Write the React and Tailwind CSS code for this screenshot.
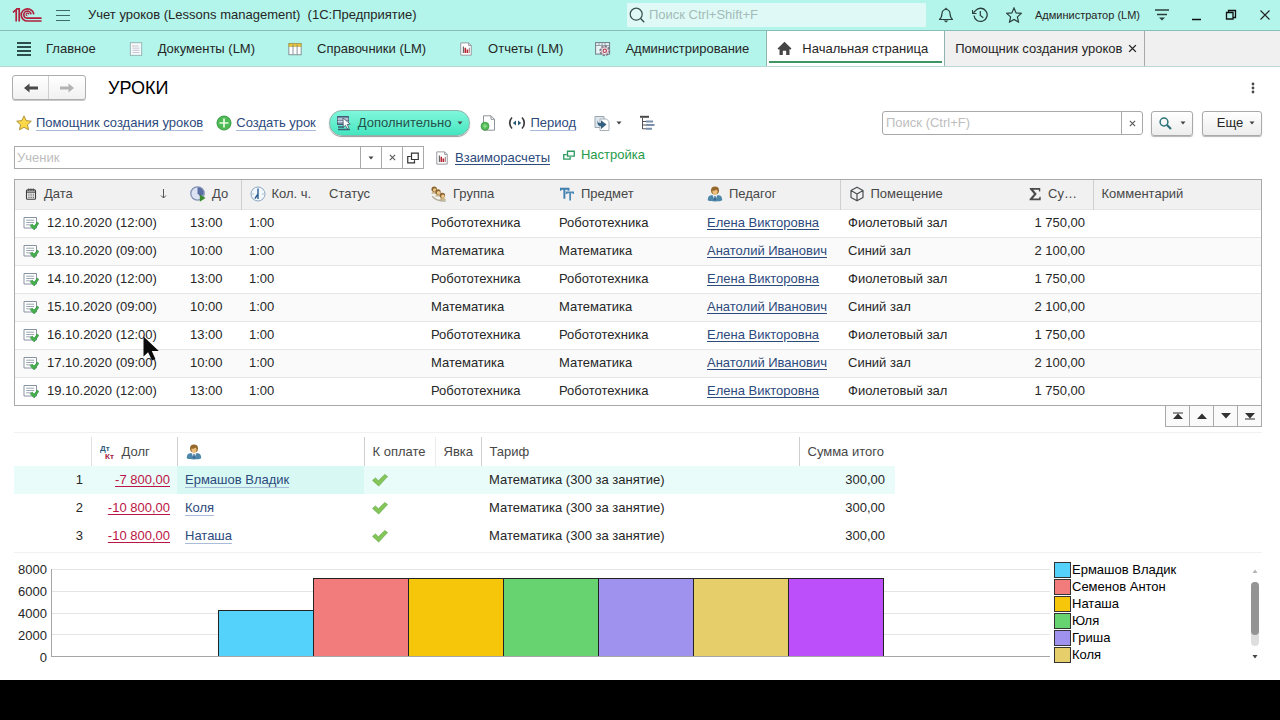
import React from 'react';

const lessons = [
  { date: '12.10.2020 (12:00)', to: '13:00', subject: 'Робототехника', teacher: 'Елена Викторовна', room: 'Фиолетовый зал', sum: '1 750,00' },
  { date: '13.10.2020 (09:00)', to: '10:00', subject: 'Математика', teacher: 'Анатолий Иванович', room: 'Синий зал', sum: '2 100,00' },
  { date: '14.10.2020 (12:00)', to: '13:00', subject: 'Робототехника', teacher: 'Елена Викторовна', room: 'Фиолетовый зал', sum: '1 750,00' },
  { date: '15.10.2020 (09:00)', to: '10:00', subject: 'Математика', teacher: 'Анатолий Иванович', room: 'Синий зал', sum: '2 100,00' },
  { date: '16.10.2020 (12:00)', to: '13:00', subject: 'Робототехника', teacher: 'Елена Викторовна', room: 'Фиолетовый зал', sum: '1 750,00', pointer: true },
  { date: '17.10.2020 (09:00)', to: '10:00', subject: 'Математика', teacher: 'Анатолий Иванович', room: 'Синий зал', sum: '2 100,00' },
  { date: '19.10.2020 (12:00)', to: '13:00', subject: 'Робототехника', teacher: 'Елена Викторовна', room: 'Фиолетовый зал', sum: '1 750,00' },
];

const students = [
  { debt: '-7 800,00', name: 'Ермашов Владик' },
  { debt: '-10 800,00', name: 'Коля' },
  { debt: '-10 800,00', name: 'Наташа' },
];

const bars = [
  { value: 4200, color: 'bg-[#55d2fc]' },
  { value: 7200, color: 'bg-[#f27b7b]' },
  { value: 7200, color: 'bg-[#f5c60a]' },
  { value: 7200, color: 'bg-[#66d370]' },
  { value: 7200, color: 'bg-[#9f91ee]' },
  { value: 7200, color: 'bg-[#e6cf6b]' },
  { value: 7200, color: 'bg-[#bd4ffb]' },
];

const legend = [
  { name: 'Ермашов Владик', color: 'bg-[#55d2fc]' },
  { name: 'Семенов Антон', color: 'bg-[#f27b7b]' },
  { name: 'Наташа', color: 'bg-[#f5c60a]' },
  { name: 'Юля', color: 'bg-[#66d370]' },
  { name: 'Гриша', color: 'bg-[#9f91ee]' },
  { name: 'Коля', color: 'bg-[#e6cf6b]' },
];

function Icon({ size = 16, className = '', children }) {
  return (
    <svg width={size} height={size} viewBox="0 0 16 16" fill="none" className={`shrink-0 ${className}`} aria-hidden="true">
      {children}
    </svg>
  );
}

const Logo = () => (
  <svg width="30" height="16" viewBox="0 0 30 16" fill="none" stroke="#b0203c" strokeWidth="1.7" className="shrink-0" aria-hidden="true">
    <path d="M1 5.4 4.2 2.6v12M4.2 1.8h3v12.8" />
    <path d="M21.8 7.4A6.3 6.1 0 1 0 15.5 14H29.6" />
    <path d="M19 7.4A3.6 3.5 0 1 0 15.5 11.2H29.6" />
    <path d="M16.8 7.4a1.4 1.3 0 1 0-1.3 1.3" strokeWidth="1.1" />
  </svg>
);

const Caret = ({ className = '' }) => (
  <svg width="6" height="4" viewBox="0 0 6 4" className={`shrink-0 ${className}`} aria-hidden="true"><path d="M.5.5h5L3 3.5z" fill="#444" /></svg>
);

const Cross = ({ size = 7, color = '#555' }) => (
  <svg width={size} height={size} viewBox="0 0 8 8" className="shrink-0" aria-hidden="true"><path d="M1 1l6 6M7 1 1 7" stroke={color} strokeWidth="1.2" /></svg>
);

const ReportIcon = ({ size = 14 }) => (
  <Icon size={size}>
    <path d="M2 1h9l3 3v11H2z" fill="#fff" stroke="#8d8f96" />
    <path d="M11 1v3h3" stroke="#8d8f96" />
    <path d="M5 5v7.5" stroke="#555" strokeWidth="1.2" />
    <path d="M7.2 6.5v6M9.6 8.5v4" stroke="#b3262f" strokeWidth="1.8" />
    <path d="M11.8 6.5v6" stroke="#7a3b3f" strokeWidth=".8" />
  </Icon>
);

const DocIcon = () => (
  <Icon size={14}>
    <rect x="1.5" y=".8" width="13" height="14.4" fill="#f4fbfb" stroke="#93aab0" />
    <path d="M6 4.5h5M4 7h8M4 9.5h8M4 12h8" stroke="#c6bccd" />
    <path d="M4 4.5h1.4" stroke="#d06a6a" />
  </Icon>
);

const BookIcon = () => (
  <Icon size={14}>
    <rect x="1" y="1.6" width="14" height="13" fill="#fff" stroke="#77858a" />
    <path d="M1 2h14v3H1z" fill="#eccb3d" stroke="#b69a2c" strokeWidth=".7" />
    <path d="M5.7 3v11.5M10.4 3v11.5" stroke="#77858a" />
  </Icon>
);

const GearIcon = () => (
  <Icon>
    <rect x=".6" y="1.6" width="14" height="11.5" fill="#e9f4f5" stroke="#6e7a84" />
    <path d="M1 4.5h13.4M4 2v2M7 2v2M10 2v2" stroke="#8a95a0" strokeWidth=".9" />
    <circle cx="9.8" cy="9.8" r="4.6" fill="#f4eff2" stroke="#77707f" strokeWidth="1.6" strokeDasharray="2.2 1.3" />
    <circle cx="9.8" cy="9.8" r="3.7" fill="#f4eff2" stroke="#8a828f" strokeWidth=".7" />
    <circle cx="9.8" cy="9.8" r="1.7" stroke="#b8485a" strokeWidth="1.2" />
  </Icon>
);

const HomeIcon = () => (
  <Icon size={15}><path d="M8 .8 15.4 8l-1.2 1.2-.9-.8V15H9.8v-4.6H6.2V15H2.7V8.4l-.9.8L.6 8z" fill="#444" /></Icon>
);

const PersonIcon = () => (
  <Icon>
    <path d="M.8 14.2c0-3.6 1.6-4.9 4.4-5.2h5.6c2.8.3 4.4 1.6 4.4 5.2-1.5 1.6-12.9 1.6-14.4 0z" fill="#4c86a8" />
    <path d="M5.4 9h5.2L8 14.4z" fill="#e8eff5" />
    <path d="M7.5 10h1l.5 3.5-1 1.500-1-1.500z" fill="#31618c" />
    <circle cx="8" cy="4.6" r="4" fill="#94682c" />
    <path d="M5.4 4.6c1.8.2 2.9-.4 3.700-1.2.5.7.9 1 1.5 1.200.2 2.600-1 4.400-2.600 4.400S5.200 7.200 5.400 4.600z" fill="#edbf7c" />
  </Icon>
);

const PostedIcon = () => (
  <Icon>
    <path d="M1 2.5h12.5V13H1z" fill="#fff" stroke="#8793a0" />
    <path d="M3.2 5.2h8M3.2 7.5h8M3.2 9.8h5" stroke="#9aa6b2" />
    <path d="m7.2 10.8 2-1.7 1.9 2 3.3-4 1.4 1.3-4.6 6.6z" fill="#46b14c" stroke="#2c8a3c" strokeWidth=".6" />
  </Icon>
);

const CheckIcon = () => (
  <Icon><path d="m.6 8.4 2.8-2.5 3 2.9 6.4-6.2 2.7 2L6.7 14z" fill="#84c659" stroke="#62a842" strokeWidth=".7" /></Icon>
);

const GroupIcon = () => (
  <Icon>
    {[[3.2, 3.2], [7, 6], [11.4, 9.4]].map(([x, y]) => (
      <g key={x}>
        <path d={`M${x - 2.8} ${y + 4.6}c0-3 5.6-3 6.2 0z`} fill="#c9b58a" />
        <circle cx={x} cy={y} r="2.7" fill="#8d642d" />
        <circle cx={x + 0.5} cy={y + 0.8} r="1.7" fill="#edc98e" />
      </g>
    ))}
    <path d="M1.2 10.2c2.5 3.200 6 5 13.500 4.800" stroke="#b5ad97" strokeWidth="1.4" />
  </Icon>
);

const CalendarIcon = () => (
  <Icon size={12}>
    <rect x="2" y="2.5" width="12" height="12.5" rx="1.5" stroke="#3c3c3c" strokeWidth="1.5" />
    <path d="M2 5.5h12" stroke="#3c3c3c" strokeWidth="1.5" />
    <path d="M5 .5v3M8 .5v3M11 .5v3" stroke="#3c3c3c" strokeWidth="1.4" />
    <path d="M4.5 8.2h7.5M4.5 10.5h7.5M4.5 12.700h7.5" stroke="#3c3c3c" strokeWidth="1.200" strokeDasharray="1.5 1.4" />
  </Icon>
);

const EndTimeIcon = () => (
  <Icon>
    <circle cx="7.5" cy="7.5" r="6.7" fill="#dbe3f2" stroke="#8491b4" strokeWidth="1.3" />
    <path d="M7.5 7.5V1.2a6.3 6.3 0 0 1 6.3 6.3l-2.5 4z" fill="#5c6fa2" />
    <path d="M9.8 8.5 15.5 12l-5.7 3.8z" fill="#3b8b2e" />
  </Icon>
);

const ClockIcon = () => (
  <Icon>
    <circle cx="8" cy="8" r="7" fill="#f3f8fc" stroke="#8ba6bf" />
    <path d="M8 2.5V13M8 8l-3 4.5" stroke="#2a5f91" strokeWidth="1.4" />
    <path d="M2.5 8h1M12.5 8h1" stroke="#6b8aa5" />
  </Icon>
);

const SubjectIcon = () => (
  <Icon size={14}>
    <path d="M.5 4.2V2h9.200v2.200M5 2v11.500" stroke="#3f7fae" strokeWidth="2.2" />
    <path d="M7.500 8V6h8v2M11.600 6v9.500" stroke="#4d8ab5" strokeWidth="2" />
  </Icon>
);

const CubeIcon = () => (
  <Icon>
    <path d="M8 1.2 14 4.6v6.8l-6 3.4-6-3.4V4.6zM2 4.6 8 8l6-3.4M8 8v6.8" stroke="#4a4f52" strokeWidth="1.2" strokeLinejoin="round" />
  </Icon>
);

const SigmaIcon = () => (
  <Icon size={14}><path d="M2 1h12v4h-1.2l-.6-2H6l4 5-4.5 5.2h7l.8-2.200h1.200V15H1.800v-1.300L6.800 8 2 2.300z" fill="#4a4a4a" /></Icon>
);

const StarIcon = () => (
  <Icon><path d="m8 .9 2.2 4.700 5.100.6-3.800 3.500 1 5.100L8 12.300l-4.500 2.500 1-5.100L.7 6.200l5.100-.6z" fill="#fbd84a" stroke="#a98a2e" strokeWidth=".9" strokeLinejoin="round" /></Icon>
);

const PlusIcon = () => (
  <Icon>
    <circle cx="8" cy="8" r="7" fill="#4dba54" stroke="#3b9a46" />
    <path d="M8 3.5v9M3.5 8h9" stroke="#e9fbe6" strokeWidth="1.7" />
  </Icon>
);

const ActionIcon = () => (
  <Icon>
    <path d="M1.5 1.500h11v8h-11z" fill="#7b90a8" stroke="#3f5a73" />
    <path d="M1.5 4h11M1.5 6.700h11" stroke="#e7eef3" />
    <path d="M2 12h6M2 14.500h12" stroke="#3f5a73" strokeWidth="1.4" />
    <path d="m7 3 .3 9.300 2.200-2 1.600 3.200 1.700-.9-1.600-3 3-.5z" fill="#fff" stroke="#44566a" strokeWidth=".8" />
  </Icon>
);

const NewDocIcon = () => (
  <Icon>
    <path d="M3.5.8H11l3.500 3.500v10.900h-11z" fill="#fff" stroke="#8e9499" />
    <path d="M11 .8v3.500h3.500" stroke="#8e9499" />
    <circle cx="5" cy="11.2" r="4" fill="#52b957" stroke="#3c9c44" strokeWidth=".8" />
    <path d="M5 9v4.400M2.800 11.200h4.400" stroke="#8fe08d" strokeWidth="1.2" />
  </Icon>
);

const PeriodIcon = () => (
  <svg width="18" height="14" viewBox="0 0 18 14" fill="none" className="shrink-0" aria-hidden="true">
    <path d="M4 1.500C1 4.500 1 9.500 4 12.500M14 1.500c3 3 3 8 0 11" stroke="#3c3c3c" strokeWidth="1.7" />
    <path d="M8 4.500v5L4.800 7zM10 4.500v5L13.200 7z" fill="#2d5872" />
  </svg>
);

const ExportIcon = () => (
  <Icon>
    <path d="M1 1.500h9v11H1z" fill="#dfe6ec" stroke="#9aa7b3" />
    <path d="M6 4h6.500l2.500 2.500v9H6z" fill="#fff" stroke="#a5afb8" />
    <path d="M3.500 5c0 2.500 1 3 3.500 3V5.200l5.500 4.300L7 14v-2.800C4 11 3 9 3.500 5z" fill="#33607f" />
  </Icon>
);

const TreeIcon = () => (
  <Icon>
    <path d="M1 1.800h9" stroke="#4a4a4a" strokeWidth="2" />
    <path d="M3.500 3v11M3.500 6.500H7M3.500 10H7M3.500 13.800H7" stroke="#555" />
    <path d="M7 6.500h7M7 10h8.500M7 13.800h6" stroke="#7890ac" strokeWidth="2" />
  </Icon>
);

const WindowsIcon = ({ color = '#333', size = 12 }) => (
  <Icon size={size}>
    <path d="M6 1.500h9V10H6z" stroke={color} strokeWidth="1.6" />
    <path d="M5 6H1v8.500h9V11" stroke={color} strokeWidth="1.6" />
  </Icon>
);

// smaller, flatter variant used by the settings link
const LinkedWindowsIcon = () => (
  <Icon size={12}>
    <path d="M6 3h9v6.500H6z" stroke="#2f9a62" strokeWidth="1.8" />
    <path d="M5 7.500H1v6h8.500v-3" stroke="#2f9a62" strokeWidth="1.8" />
  </Icon>
);

const DebtIcon = () => (
  <svg width="16" height="16" viewBox="0 0 16 16" className="shrink-0 font-['Liberation_Sans',sans-serif] text-[8px] font-bold" aria-hidden="true">
    <text x="0" y="7" fill="#2f5f80">Дт</text>
    <text x="5" y="15" fill="#a3213c">Кт</text>
  </svg>
);

const Pointer = () => (
  <svg width="18" height="26" viewBox="0 0 18 26" className="absolute left-[128px] top-[14px] z-10" aria-hidden="true">
    <path d="M.5.5v20l4.600-4.200L9 24.500l3.400-1.500-3.600-8h7z" fill="#0b0b0b" />
  </svg>
);

function NavItem({ icon, label }) {
  return (
    <a href="#" className="flex items-center gap-[15px] whitespace-nowrap">
      <span className="flex w-[14px] justify-center">{icon}</span>
      {label}
    </a>
  );
}

function TopBar() {
  return (
    <header className="flex h-[31px] items-center border-b border-[#86bfb8] bg-[#b3f5ea] pl-3">
      <Logo />
      <button aria-label="Меню" className="ml-[14px]">
        <svg width="14" height="14" viewBox="0 0 14 14" aria-hidden="true"><path d="M0 2.5h14M0 7.5h14M0 12.5h14" stroke="#3e6b66" /></svg>
      </button>
      <h1 className="ml-[18px] whitespace-pre">{'Учет уроков (Lessons management)  (1С:Предприятие)'}</h1>
      <label className="ml-auto flex h-6 w-[299px] items-center gap-1 bg-[#dffaf6] pl-[2px]">
        <Icon>
          <circle cx="7.2" cy="7.2" r="6" stroke="#36504e" strokeWidth="1.2" />
          <path d="m11.600 11.600 3.600 3.600" stroke="#36504e" strokeWidth="1.4" />
        </Icon>
        <input type="search" aria-label="Поиск" placeholder="Поиск Ctrl+Shift+F" className="min-w-0 flex-1 bg-transparent outline-none placeholder:text-[#a3bab8]" />
      </label>
      <div className="ml-3 flex items-center gap-[18px]">
        <button aria-label="Уведомления">
          <Icon>
            <path d="M1.500 12.500c2-1.500 2.300-3.500 2.500-6C4.200 4 5.500 2.500 8 2.500S11.800 4 12 6.500c.2 2.500.5 4.500 2.500 6z" stroke="#2b3f3d" strokeWidth="1.2" strokeLinejoin="round" />
            <path d="M7 2.200a1 1 0 0 1 2 0" stroke="#2b3f3d" />
            <path d="M5.500 13.500h5L8 15.500z" fill="#2b3f3d" />
          </Icon>
        </button>
        <button aria-label="История">
          <Icon>
            <path d="M2 8.500A6.600 6.600 0 1 0 3.500 3.600L1.500 5.800" stroke="#2b3f3d" strokeWidth="1.3" />
            <path d="M.5 3v3.500h4M8.300 4v4.500l3 2.200" stroke="#2b3f3d" strokeWidth="1.2" />
          </Icon>
        </button>
        <button aria-label="Избранное">
          <Icon><path d="m8 1 2.100 4.900 5.200.5-3.900 3.500 1.100 5.200L8 12.400l-4.500 2.700 1.100-5.200L.7 6.400l5.200-.5z" stroke="#2b3f3d" strokeWidth="1.2" /></Icon>
        </button>
      </div>
      <a href="#" className="ml-[13px] whitespace-nowrap text-[11px]">Администратор (LM)</a>
      <div className="ml-[15px] mr-[9px] flex items-center gap-[22px]">
        <button aria-label="Настройки окна">
          <svg width="14" height="14" viewBox="0 0 14 14" aria-hidden="true">
            <path d="M0 2h14M2 6.500h10" stroke="#2b3f3d" strokeWidth="1.3" />
            <path d="M4 9.500h6l-3 3z" fill="#2b3f3d" />
          </svg>
        </button>
        <button aria-label="Свернуть">
          <svg width="12" height="12" viewBox="0 0 12 12" aria-hidden="true"><path d="M1 10.500h9" stroke="#111" strokeWidth="1.5" /></svg>
        </button>
        <button aria-label="Восстановить">
          <svg width="12" height="12" viewBox="0 0 12 12" fill="none" aria-hidden="true">
            <path d="M1.500 3.500h6.500V10H1.500zM3.500 3.500v-2h7v7H8" stroke="#111" strokeWidth="1.3" />
          </svg>
        </button>
        <button aria-label="Закрыть">
          <svg width="12" height="12" viewBox="0 0 12 12" aria-hidden="true"><path d="m1.500 1.500 9 9M10.500 1.500l-9 9" stroke="#222" strokeWidth="1.1" /></svg>
        </button>
      </div>
    </header>
  );
}

function NavBar() {
  return (
    <nav className="flex h-9 border-b border-[#b9d8d4] bg-[#b3f5ea]">
      <div className="flex items-center gap-[33px] px-[17px]">
        <NavItem
          label="Главное"
          icon={<svg width="14" height="14" viewBox="0 0 14 14" aria-hidden="true"><path d="M0 1h14M0 5h14M0 9h14M0 13h14" stroke="#2c4f4c" strokeWidth="1.8" /></svg>}
        />
        <NavItem label="Документы (LM)" icon={<DocIcon />} />
        <NavItem label="Справочники (LM)" icon={<BookIcon />} />
        <NavItem label="Отчеты (LM)" icon={<ReportIcon />} />
        <NavItem label="Администрирование" icon={<GearIcon />} />
      </div>
      <div className="flex flex-1 bg-[#f0f0f0]">
        <a href="#" className="relative flex items-center gap-[10px] whitespace-nowrap border-x border-[#8fb5b0] bg-white pl-[10px] pr-4">
          <HomeIcon />
          Начальная страница
          <span className="absolute inset-x-[2px] bottom-[3px] h-[2px] bg-[#3d9563]"></span>
        </a>
        <div className="flex items-center gap-[6px] whitespace-nowrap border-r border-[#a9a9a9] pl-[10px] pr-[7px]">
          <a href="#">Помощник создания уроков</a>
          <button aria-label="Закрыть вкладку"><Cross size={9} color="#222" /></button>
        </div>
      </div>
    </nav>
  );
}

const plainButton = 'flex items-center justify-center rounded-[3px] border border-[#a9a9a9] bg-linear-to-b from-white to-[#ededed] shadow-[0_1px_1px_#b5b5b5]';
const toolLink = 'border-b border-[#a9bddb] leading-[15px] text-[#2d4a7c]';

function Toolbar() {
  return (
    <div className="mt-[10px] flex h-[26px] items-center whitespace-nowrap">
      <div className="flex items-center gap-1 pl-[2px]">
        <StarIcon />
        <a href="#" className={toolLink}>Помощник создания уроков</a>
      </div>
      <div className="ml-[13px] flex items-center gap-1">
        <PlusIcon />
        <a href="#" className={toolLink}>Создать урок</a>
      </div>
      <button className="ml-[13px] flex h-[26px] items-center rounded-full border border-[#8cb5ab] bg-linear-to-b from-[#7ff7dc] to-[#41e6c0] px-[6px] shadow-[0_1px_1px_#999]">
        <ActionIcon />
        <span className="ml-[6px] mr-[6px] text-[#24504a]">Дополнительно</span>
        <Caret />
      </button>
      <button aria-label="Новый документ" className="ml-[10px]"><NewDocIcon /></button>
      <div className="ml-3 flex items-center gap-1">
        <PeriodIcon />
        <a href="#" className={toolLink}>Период</a>
      </div>
      <button aria-label="Ввести на основании" className="ml-[18px] flex items-center gap-[6px]">
        <ExportIcon />
        <Caret />
      </button>
      <button aria-label="Структура" className="ml-[17px]"><TreeIcon /></button>
      <div className="ml-auto flex h-6 w-[261px] rounded-[3px] border border-[#a9a9a9]">
        <input type="search" aria-label="Поиск по списку" placeholder="Поиск (Ctrl+F)" className="min-w-0 flex-1 px-[3px] outline-none placeholder:text-[#bdbdbd]" />
        <button aria-label="Очистить поиск" className="flex w-[21px] items-center justify-center border-l border-[#a9a9a9]"><Cross /></button>
      </div>
      <button aria-label="Найти" className={`${plainButton} ml-2 h-[25px] w-[42px] gap-2`}>
        <svg width="13" height="13" viewBox="0 0 13 13" fill="none" aria-hidden="true">
          <circle cx="5" cy="5" r="3.9" stroke="#2b7479" strokeWidth="1.5" />
          <path d="m8 8 4 4" stroke="#2b6f78" strokeWidth="2.2" />
        </svg>
        <Caret />
      </button>
      <button className={`${plainButton} ml-[9px] h-[25px] w-[60px] gap-[6px] pl-2`}>
        Еще
        <Caret />
      </button>
    </div>
  );
}

function FilterRow() {
  return (
    <div className="mt-[10px] flex h-[23px] items-center whitespace-nowrap">
      <div className="flex h-[23px] w-[410px] border border-[#a9a9a9]">
        <input type="text" aria-label="Ученик" placeholder="Ученик" className="min-w-0 flex-1 px-[2px] outline-none placeholder:text-[#bdbdbd]" />
        <button aria-label="Выбрать из списка" className="flex w-[21px] items-center justify-center border-l border-[#a9a9a9]"><Caret /></button>
        <button aria-label="Очистить" className="flex w-[21px] items-center justify-center border-l border-[#a9a9a9]"><Cross /></button>
        <button aria-label="Открыть" className="flex w-[21px] items-center justify-center border-l border-[#a9a9a9]"><WindowsIcon /></button>
      </div>
      <div className="ml-[11px] flex items-center gap-[6px]">
        <ReportIcon />
        <a href="#" className="leading-[15px] text-[#2d4a7c] underline underline-offset-2">Взаиморасчеты</a>
      </div>
      <a href="#" className="mb-[6px] ml-[13px] flex items-center gap-[6px] text-[#259a49]">
        <LinkedWindowsIcon />
        Настройка
      </a>
    </div>
  );
}

function HeadCell({ icon, children, className = '' }) {
  return (
    <th className={`px-2 text-left font-normal ${className}`}>
      <span className="flex items-center gap-[6px]">
        {icon}
        {children}
      </span>
    </th>
  );
}

function LessonsTable() {
  return (
    <div className="mt-[10px] border border-[#a9a9a9]">
      <table className="w-full table-fixed border-collapse whitespace-nowrap">
        <colgroup>
          <col className="w-[167px]" />
          <col className="w-[59px]" />
          <col className="w-[80px]" />
          <col className="w-[102px]" />
          <col className="w-[128px]" />
          <col className="w-[148px]" />
          <col className="w-[141px]" />
          <col className="w-[180px]" />
          <col className="w-[73px]" />
          <col />
        </colgroup>
        <thead>
          <tr className="h-[29px] bg-[#f1f1f1] text-[#474747]">
            <HeadCell icon={<span className="flex w-[15px] justify-center"><CalendarIcon /></span>}>
              <span className="flex-1">Дата</span>
              <svg width="7" height="10" viewBox="0 0 7 10" className="mr-[7px]" fill="none" aria-hidden="true"><path d="M3.500 0v9M1 6.500l2.500 2.500L6 6.500" stroke="#555" /></svg>
            </HeadCell>
            <HeadCell icon={<EndTimeIcon />}>До</HeadCell>
            <HeadCell icon={<ClockIcon />} className="border-l border-[#cfcfcf]">Кол. ч.</HeadCell>
            <HeadCell>Статус</HeadCell>
            <HeadCell icon={<GroupIcon />}>Группа</HeadCell>
            <HeadCell icon={<span className="flex w-4 justify-center"><SubjectIcon /></span>}>Предмет</HeadCell>
            <HeadCell icon={<PersonIcon />}>Педагог</HeadCell>
            <HeadCell icon={<CubeIcon />} className="border-l border-[#cfcfcf]">Помещение</HeadCell>
            <HeadCell icon={<SigmaIcon />}>Су…</HeadCell>
            <HeadCell className="border-l border-[#cfcfcf]">Комментарий</HeadCell>
          </tr>
        </thead>
        <tbody>
          {lessons.map((row) => (
            <tr key={row.date} className="h-7 border-t border-[#e6e6e6] even:bg-[#fafafa]">
              <td className="relative pl-2">
                <span className="flex items-center gap-2">
                  <PostedIcon />
                  {row.date}
                </span>
                {row.pointer && <Pointer />}
              </td>
              <td className="px-2">{row.to}</td>
              <td className="px-2">1:00</td>
              <td></td>
              <td className="px-2">{row.subject}</td>
              <td className="px-2">{row.subject}</td>
              <td className="px-2"><a href="#" className="text-[#2d4a7c] underline underline-offset-2">{row.teacher}</a></td>
              <td className="px-2">{row.room}</td>
              <td className="pr-2 text-right">{row.sum}</td>
              <td></td>
            </tr>
          ))}
        </tbody>
      </table>
    </div>
  );
}

function ListPager() {
  const cell = 'flex w-6 items-center justify-center border-r border-[#a9a9a9]';
  return (
    <div className="flex justify-end">
      <div className="flex h-[21px] border-b border-l border-[#a9a9a9] bg-[#fafafa]">
        <button aria-label="В начало" className={cell}><svg width="12" height="8" viewBox="0 0 12 8" aria-hidden="true"><path d="M1 .5h10v1H1zM6 1.500 11 7H1z" fill="#333" /></svg></button>
        <button aria-label="Вверх" className={cell}><svg width="12" height="8" viewBox="0 0 12 8" aria-hidden="true"><path d="M6 1.500 11 7H1z" fill="#333" /></svg></button>
        <button aria-label="Вниз" className={cell}><svg width="12" height="8" viewBox="0 0 12 8" aria-hidden="true"><path d="M1 1h10L6 6.500z" fill="#333" /></svg></button>
        <button aria-label="В конец" className={cell}><svg width="12" height="8" viewBox="0 0 12 8" aria-hidden="true"><path d="M1 1h10L6 6.500zM1 6.500h10v1H1z" fill="#333" /></svg></button>
      </div>
    </div>
  );
}

function StudentsTable() {
  return (
    <div className="mt-[5px] border-y border-[#f1f1f1] pb-[2px] pt-1">
      <table className="w-[881px] table-fixed border-collapse whitespace-nowrap">
        <colgroup>
          <col className="w-[77px]" />
          <col className="w-[86px]" />
          <col className="w-[187px]" />
          <col className="w-[71px]" />
          <col className="w-[46px]" />
          <col className="w-[318px]" />
          <col />
        </colgroup>
        <thead>
          <tr className="h-[29px] text-[#474747]">
            <HeadCell />
            <HeadCell icon={<DebtIcon />} className="border-l border-[#e2e2e2]">Долг</HeadCell>
            <HeadCell icon={<PersonIcon />} className="border-l border-[#cfcfcf]" />
            <HeadCell className="border-l border-[#cfcfcf]">К оплате</HeadCell>
            <HeadCell className="border-l border-[#ececec]">Явка</HeadCell>
            <HeadCell className="border-l border-[#cfcfcf]">Тариф</HeadCell>
            <HeadCell className="border-l border-[#cfcfcf]">Сумма итого</HeadCell>
          </tr>
        </thead>
        <tbody>
          {students.map((s, i) => (
            <tr key={s.name} className="h-7 first:bg-[#eafcfa]">
              <td className="px-2 text-right">{i + 1}</td>
              <td className="pr-[7px] text-right"><a href="#" className="text-[#bb1545] underline underline-offset-2">{s.debt}</a></td>
              <td className={i === 0 ? 'bg-[#d8f8f4] px-2' : 'px-2'}><a href="#" className={toolLink}>{s.name}</a></td>
              <td className="px-2"><CheckIcon /></td>
              <td></td>
              <td className="px-2">Математика (300 за занятие)</td>
              <td className="pr-[10px] text-right">300,00</td>
            </tr>
          ))}
        </tbody>
      </table>
    </div>
  );
}

function Chart() {
  return (
    <section className="mt-[6px] flex">
      <div className="flex w-[33px] flex-col text-right leading-[22px]">
        {[8000, 6000, 4000, 2000, 0].map((v) => (
          <span key={v}>{v}</span>
        ))}
      </div>
      <div className="relative mb-3 ml-1 mt-[10px] flex h-[88px] flex-1 items-end border-b border-l border-[#a5a5a5]">
        <div className="absolute inset-0 flex flex-col">
          {[8000, 6000, 4000, 2000].map((v) => (
            <div key={v} className="flex-1 border-t border-[#e4e4e4]"></div>
          ))}
        </div>
        <div className="relative ml-[16.667%] mr-[16.667%] flex h-full flex-1 items-end">
          {bars.map((b, i) => (
            <div
              key={i}
              className={`flex-1 border-l border-t border-[#222] last:border-r ${b.color}`}
              style={{ height: `${b.value / 80}%` }}
            ></div>
          ))}
        </div>
      </div>
      <ul className="ml-1 mt-[3px] flex w-[196px] flex-col gap-px text-black">
        {legend.map((l) => (
          <li key={l.name} className="flex items-center gap-px leading-4">
            <span className={`h-4 w-[17px] border border-[#333] ${l.color}`}></span>
            {l.name}
          </li>
        ))}
      </ul>
      <div className="mb-[10px] mr-[2px] mt-[10px] flex w-[10px] flex-col items-center justify-between">
        <svg width="6" height="5" viewBox="0 0 6 5" aria-hidden="true"><path d="M3 .5 5.500 4h-5z" fill="#b5b5b5" /></svg>
        <div className="my-2 w-2 flex-1 rounded-full bg-[#dedede]">
          <div className="h-5/6 rounded-full bg-[#949494]"></div>
        </div>
        <svg width="6" height="5" viewBox="0 0 6 5" aria-hidden="true"><path d="M3 4.500.5 1h5z" fill="#444" /></svg>
      </div>
    </section>
  );
}

export default function App() {
  return (
    <div className="flex min-h-screen flex-col bg-white font-['Liberation_Sans',Arial,sans-serif] text-[13px] leading-4 text-[#262626]">
      <TopBar />
      <NavBar />
      <main className="flex-1 pl-[14px] pr-[18px]">
        <div className="-ml-[2px] mt-2 flex items-center">
          <div className="flex h-[25px] rounded-[3px] border border-[#adadad] bg-linear-to-b from-white to-[#f1f1f1] shadow-[0_1px_0_#c9c9c9]">
            <button aria-label="Назад" className="flex w-9 items-center justify-center border-r border-[#cfcfcf]">
              <svg width="14" height="10" viewBox="0 0 14 10" aria-hidden="true"><path d="M0 5 5.500.5v3H14v3H5.500v3z" fill="#4a4a4a" /></svg>
            </button>
            <button aria-label="Вперед" className="flex w-9 items-center justify-center">
              <svg width="14" height="10" viewBox="0 0 14 10" aria-hidden="true"><path d="M14 5 8.500.5v3H0v3h8.500v3z" fill="#b3b3b3" /></svg>
            </button>
          </div>
          <h2 className="ml-[22px] text-lg leading-6 text-black">УРОКИ</h2>
          <button aria-label="Действия" className="ml-auto mr-[7px]">
            <svg width="4" height="12" viewBox="0 0 4 12" fill="#4a4a4a" aria-hidden="true"><circle cx="2" cy="2" r="1.4" /><circle cx="2" cy="6" r="1.4" /><circle cx="2" cy="10" r="1.4" /></svg>
          </button>
        </div>
        <Toolbar />
        <FilterRow />
        <LessonsTable />
        <ListPager />
        <StudentsTable />
        <Chart />
      </main>
      <footer className="h-10 bg-black"></footer>
    </div>
  );
}
